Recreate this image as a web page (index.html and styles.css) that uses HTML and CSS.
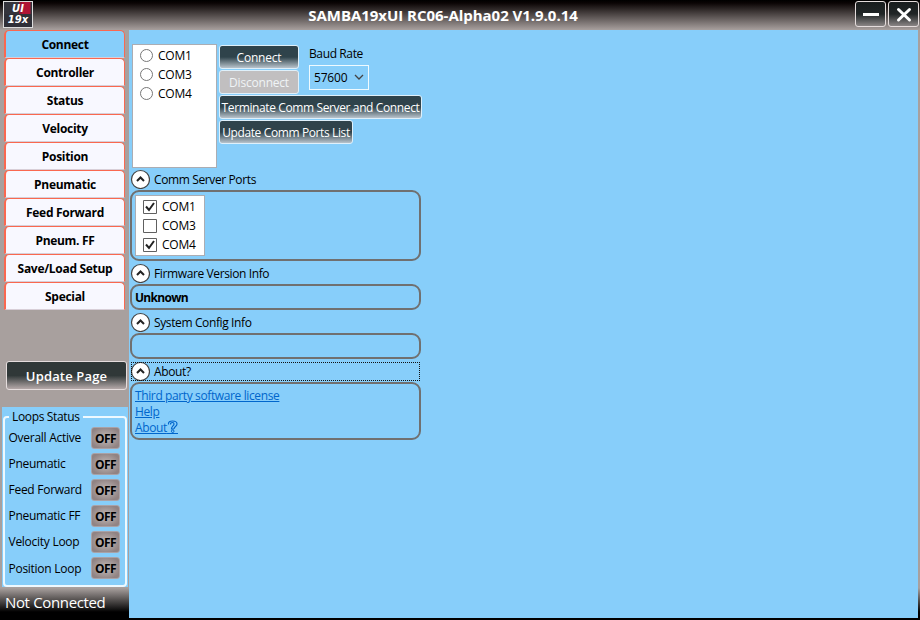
FILE: index.html
```html
<!DOCTYPE html>
<html lang="en">
<head>
<meta charset="utf-8">
<title>SAMBA19xUI</title>
<link rel="stylesheet" href="styles.css">
</head>
<body>
<div class="window">
  <header class="titlebar">
    <div class="logo"><span>UI</span><span class="logo-model">19x</span></div>
    <h1 class="title">SAMBA19xUI RC06-Alpha02 V1.9.0.14</h1>
    <div class="window-buttons">
      <button class="win-btn" aria-label="Minimize"><svg width="29" height="24" viewBox="0 0 29 24"><path d="M7 12.500h16" stroke="#fff" stroke-width="3"/></svg></button>
      <button class="win-btn" aria-label="Close"><svg width="29" height="24" viewBox="0 0 29 24"><path d="M9.500 7.500l11 10.500M20.500 7.500l-11 10.500" stroke="#fff" stroke-width="3" stroke-linecap="round"/></svg></button>
    </div>
  </header>
  <div class="body">
    <aside class="sidebar">
      <nav class="tabs">
        <a class="tab active">Connect</a>
        <a class="tab">Controller</a>
        <a class="tab">Status</a>
        <a class="tab">Velocity</a>
        <a class="tab">Position</a>
        <a class="tab">Pneumatic</a>
        <a class="tab">Feed Forward</a>
        <a class="tab">Pneum. FF</a>
        <a class="tab">Save/Load Setup</a>
        <a class="tab">Special</a>
      </nav>
      <button class="update-page"><span>Update Page</span></button>
      <section class="loops">
        <fieldset class="loop-group">
          <legend>Loops Status</legend>
          <div class="loop"><span>Overall Active</span><b class="off">OFF</b></div>
          <div class="loop"><span>Pneumatic</span><b class="off">OFF</b></div>
          <div class="loop"><span>Feed Forward</span><b class="off">OFF</b></div>
          <div class="loop"><span>Pneumatic FF</span><b class="off">OFF</b></div>
          <div class="loop"><span>Velocity Loop</span><b class="off">OFF</b></div>
          <div class="loop"><span>Position Loop</span><b class="off">OFF</b></div>
        </fieldset>
      </section>
      <div class="status">Not Connected</div>
    </aside>
    <main class="content">
      <div class="connection">
        <div class="port-list">
          <div class="option"><i class="radio"></i>COM1</div>
          <div class="option"><i class="radio"></i>COM3</div>
          <div class="option"><i class="radio"></i>COM4</div>
        </div>
        <div class="controls">
          <div class="control-top">
            <div class="button-pair">
              <button class="btn fixed">Connect</button>
              <button class="btn fixed disabled">Disconnect</button>
            </div>
            <div class="baud">
              <div class="baud-label">Baud Rate</div>
              <div class="select">57600<svg width="10" height="7" viewBox="0 0 10 7"><path d="M1 1l4 4 4-4" fill="none" stroke="#444" stroke-width="1.300"/></svg></div>
            </div>
          </div>
          <button class="btn terminate">Terminate Comm Server and Connect</button>
          <button class="btn update-list">Update Comm Ports List</button>
        </div>
      </div>

      <div class="expander"><svg class="arrow" width="20" height="20" viewBox="0 0 20 20"><circle cx="10.500" cy="10.500" r="9" fill="#fff" stroke="#444" stroke-width="1.200"/><path d="M7 12l3.500-3.500L14 12" fill="none" stroke="#222" stroke-width="2"/></svg><span>Comm Server Ports</span></div>
      <div class="panel ports">
        <div class="check-list">
          <div class="option"><svg class="check" width="14" height="14" viewBox="0 0 14 14"><path d="M.5.5h13v13H.5z" fill="#fff" stroke="#606060"/><path d="M3 6.500l3 3.500 5-7" fill="none" stroke="#222" stroke-width="2"/></svg>COM1</div>
          <div class="option"><svg class="check" width="14" height="14" viewBox="0 0 14 14"><path d="M.5.5h13v13H.5z" fill="#fff" stroke="#606060"/></svg>COM3</div>
          <div class="option"><svg class="check" width="14" height="14" viewBox="0 0 14 14"><path d="M.5.5h13v13H.5z" fill="#fff" stroke="#606060"/><path d="M3 6.500l3 3.500 5-7" fill="none" stroke="#222" stroke-width="2"/></svg>COM4</div>
        </div>
      </div>

      <div class="expander"><svg class="arrow" width="20" height="20" viewBox="0 0 20 20"><circle cx="10.500" cy="10.500" r="9" fill="#fff" stroke="#444" stroke-width="1.200"/><path d="M7 12l3.500-3.500L14 12" fill="none" stroke="#222" stroke-width="2"/></svg><span>Firmware Version Info</span></div>
      <div class="panel firmware">Unknown</div>

      <div class="expander"><svg class="arrow" width="20" height="20" viewBox="0 0 20 20"><circle cx="10.500" cy="10.500" r="9" fill="#fff" stroke="#444" stroke-width="1.200"/><path d="M7 12l3.500-3.500L14 12" fill="none" stroke="#222" stroke-width="2"/></svg><span>System Config Info</span></div>
      <div class="panel config"></div>

      <div class="expander"><svg class="arrow" width="20" height="20" viewBox="0 0 20 20"><circle cx="10.500" cy="10.500" r="9" fill="#fff" stroke="#444" stroke-width="1.200"/><path d="M7 12l3.500-3.500L14 12" fill="none" stroke="#222" stroke-width="2"/></svg><span>About?</span><svg class="focus" width="290" height="20" viewBox="0 0 290 20"><path d="M0 .5h289M0 18.500h289M.5 0v19M288.500 0v19" fill="none" stroke="#111" stroke-dasharray="1 1"/></svg></div>
      <div class="panel about">
        <a>Third party software license</a>
        <a>Help</a>
        <a class="about-link">About<svg width="11" height="14" viewBox="0 0 11 14"><path d="M1.500 4.500C1 2 3 1 5.500 1s4.500 1 4.500 3c0 2.500-3 2.500-3 5M3.500 4.500C3.500 3 4 2.500 5.500 2.500S7 3 7 4C7 6 4.500 6 4.500 9H7" fill="none" stroke="#0066cc" stroke-width="1.200"/><circle cx="5.700" cy="11.200" r="1.300" fill="none" stroke="#0066cc"/><path d="M0 13.500h11" stroke="#0066cc"/></svg></a>
      </div>
    </main>
  </div>
</div>
</body>
</html>
```
FILE: styles.css
```css
* { box-sizing: border-box; }
body { margin: 0; font: 12px/16px "Open Sans", "Noto Sans", sans-serif; color: #000; letter-spacing: -0.38px; }
button { font: inherit; letter-spacing: inherit; padding: 0; margin: 0; }
.window { width: 920px; height: 620px; display: flex; flex-direction: column; overflow: hidden;
  background: linear-gradient(#000 0, #0a0404 3px, #a8a09e 30px, #a8a09e 588px, #000 612px); }

.titlebar { height: 30px; display: grid; grid-template-columns: 64px 1fr 64px; align-items: start; }
.logo { width: 30px; height: 27px; margin: 1px 0 0 3px; border: 1px solid #ddd; color: #fff;
  background: linear-gradient(90deg, #34343c 0 15px, #8e1530 15px 18px, #b01435 18px 26px, #34343c 27px);
  font: italic bold 10px/11px "DejaVu Sans", sans-serif; letter-spacing: 0; display: flex; flex-direction: column; align-items: center; padding-top: 1px; }
.logo-model { background: #303038; width: 28px; text-align: center; height: 14px; }
.title { margin: 5px 0 0 -34px; text-align: center; color: #fff; font-size: 15px; line-height: 20px; font-weight: 700; letter-spacing: -0.03px; }
.window-buttons { display: flex; gap: 2px; padding-top: 1px; margin-left: -1px; }
.win-btn { width: 31px; height: 26px; flex: none; border: 1px solid #e4dcdc; border-radius: 3px; background: linear-gradient(#181c1d 0, #202526 50%, #8a8585 100%); }
.win-btn svg { display: block; }

.body { display: flex; height: 588px; }
.sidebar { width: 129px; display: flex; flex-direction: column; }
.tabs { margin-left: 4px; width: 121px; height: 280px; }
.tab { display: block; height: 28px; border: 1px solid #fa6850; border-left-width: 2px; border-bottom: 1px solid #d8cfd8; border-radius: 5px 5px 0 0; background: #f8f8ff; text-align: center; font-weight: 700; line-height: 27px; letter-spacing: -0.3px; }
.tab.active { background: #87cefa; }
.update-page { width: 121px; height: 29px; margin: 51px 0 17px 6px; border: 1px solid #e5dddd; border-radius: 3px; background: linear-gradient(#303838 0, #303838 50%, #b5a9a9 100%); color: #fff; font-size: 13px; font-weight: 600; letter-spacing: 0.15px; }
.loops { width: 126px; height: 180px; margin-left: 2px; background: #87cefa; padding: 1px 0 0 1px; }
.loop-group { margin: 0; padding: 0 5px 0 5px; width: 124px; height: 179px; min-width: 0; border: 2px solid #eef9ff; border-radius: 4px; }
.loop-group legend { padding: 0 3px 0 3px; margin-left: -1px; line-height: 17px; letter-spacing: -0.35px; }
.loop { display: flex; justify-content: space-between; align-items: center; height: 26.100px; margin-left: -1.500px; white-space: nowrap; letter-spacing: -0.27px; }
.off { width: 29px; height: 22px; flex: none; margin-bottom: 1px; border: 1px solid #a9a2a7; border-radius: 3px; background: radial-gradient(ellipse, #b9b1b0 15%, #918383 80%); text-align: center; line-height: 21px; font-weight: 700; letter-spacing: -0.5px; }
.status { color: #fff; font-size: 15px; line-height: 30px; padding-left: 5px; letter-spacing: -0.350px; }

.content { width: 789px; background: #87cefa; padding: 14px 0 0 1px; }
.connection { display: flex; gap: 2px; padding-left: 2px; height: 125px; }
.port-list { width: 85px; height: 124px; background: #fff; border: 1px solid #abadb3; padding: 1px 7px; }
.option { display: flex; align-items: center; height: 19px; gap: 5px; letter-spacing: -0.2px; }
.radio { width: 13px; height: 13px; border: 1px solid #777; border-radius: 50%; background: #fff; }
.controls { display: flex; flex-direction: column; align-items: flex-start; gap: 1px; padding-top: 1px; }
.control-top { display: flex; gap: 10px; height: 49px; }
.button-pair { display: flex; flex-direction: column; gap: 1px; }
.btn { height: 24px; border: 1px solid #dff0fa; border-radius: 3px; color: #fff; background: linear-gradient(#2f434b 0, #2f434b 50%, #b8c3cc 100%); line-height: 22px; padding-top: 1px; white-space: nowrap; display: flex; justify-content: center; }
.fixed { width: 80px; letter-spacing: -0.2px; }
.disabled { background: #c1bfc0; color: #f0f4f6; }
.terminate { width: 203px; }
.update-list { width: 134px; }
.baud-label { line-height: 18px; height: 20px; }
.select { width: 60px; height: 25px; border: 1px solid #eefaff; display: flex; align-items: center; justify-content: space-between; padding: 0 4px 0 4px; letter-spacing: -0.2px; }

.expander { position: relative; height: 21px; width: 291px; display: flex; align-items: center; gap: 4px; padding-top: 1px; }
.arrow { width: 20px; height: 20px; margin-bottom: 2px; }
.panel { width: 291px; border: 2px solid #707070; border-radius: 9px; margin-bottom: 2px; }
.ports { height: 71px; padding: 3px; }
.check-list { width: 70px; height: 61px; background: #fff; border: 1px solid #abadb3; padding: 1px 7px; }
.firmware { height: 26px; padding-left: 3px; line-height: 24px; font-weight: 700; letter-spacing: -0.7px; }
.config { height: 26px; }
.focus { position: absolute; left: 1px; top: 1px; }
.about { height: 58px; padding: 4px 3px 2px; display: flex; flex-direction: column; align-items: flex-start; }
.about a { height: 16px; color: #0066cc; text-decoration: underline; }
.about-link { display: flex; }
```
